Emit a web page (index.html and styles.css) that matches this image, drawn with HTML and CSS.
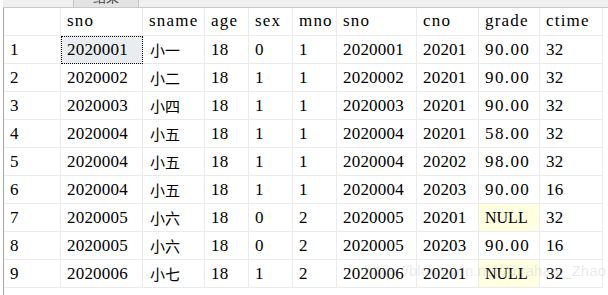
FILE: index.html
```html
<!DOCTYPE html>
<html>
<head>
<meta charset="utf-8">
<link rel="stylesheet" href="styles.css">
</head>
<body>
<div class="page">
  <div class="tabstrip">
    <div class="tab"><span class="tab-label">结果</span></div>
  </div>
  <div class="grid">
    <div class="c h"></div><div class="c h">sno</div><div class="c h">sname</div><div class="c h">age</div><div class="c h">sex</div><div class="c h">mno</div><div class="c h">sno</div><div class="c h">cno</div><div class="c h">grade</div><div class="c h">ctime</div>

    <div class="c">1</div><div class="c sel">2020001</div><div class="c cjk">小一</div><div class="c">18</div><div class="c">0</div><div class="c">1</div><div class="c">2020001</div><div class="c">20201</div><div class="c dec">90.00</div><div class="c">32</div>

    <div class="c">2</div><div class="c">2020002</div><div class="c cjk">小二</div><div class="c">18</div><div class="c">1</div><div class="c">1</div><div class="c">2020002</div><div class="c">20201</div><div class="c dec">90.00</div><div class="c">32</div>

    <div class="c">3</div><div class="c">2020003</div><div class="c cjk">小四</div><div class="c">18</div><div class="c">1</div><div class="c">1</div><div class="c">2020003</div><div class="c">20201</div><div class="c dec">90.00</div><div class="c">32</div>

    <div class="c">4</div><div class="c">2020004</div><div class="c cjk">小五</div><div class="c">18</div><div class="c">1</div><div class="c">1</div><div class="c">2020004</div><div class="c">20201</div><div class="c dec">58.00</div><div class="c">32</div>

    <div class="c">5</div><div class="c">2020004</div><div class="c cjk">小五</div><div class="c">18</div><div class="c">1</div><div class="c">1</div><div class="c">2020004</div><div class="c">20202</div><div class="c dec">98.00</div><div class="c">32</div>

    <div class="c">6</div><div class="c">2020004</div><div class="c cjk">小五</div><div class="c">18</div><div class="c">1</div><div class="c">1</div><div class="c">2020004</div><div class="c">20203</div><div class="c dec">90.00</div><div class="c">16</div>

    <div class="c">7</div><div class="c">2020005</div><div class="c cjk">小六</div><div class="c">18</div><div class="c">0</div><div class="c">2</div><div class="c">2020005</div><div class="c">20201</div><div class="c null">NULL</div><div class="c">32</div>

    <div class="c">8</div><div class="c">2020005</div><div class="c cjk">小六</div><div class="c">18</div><div class="c">0</div><div class="c">2</div><div class="c">2020005</div><div class="c">20203</div><div class="c dec">90.00</div><div class="c">16</div>

    <div class="c">9</div><div class="c">2020006</div><div class="c cjk">小七</div><div class="c">18</div><div class="c">1</div><div class="c">2</div><div class="c">2020006</div><div class="c">20201</div><div class="c null">NULL</div><div class="c">32</div>
  </div>
  <div class="watermark">https://blog.csdn.net/Abraham_Zhao</div>
</div>
</body>
</html>
```

FILE: styles.css
```css
html, body {
  margin: 0;
  padding: 0;
  background: #ffffff;
}

.page {
  position: relative;
  width: 608px;
  height: 295px;
  overflow: hidden;
  background: #ffffff;
}

.tabstrip {
  height: 7px;
  background: #f0f0f0;
  border-bottom: 1px solid #c9c9c9;
  margin-left: 3px;
  position: relative;
}

.tab {
  position: absolute;
  left: 70px;
  top: 0;
  width: 64px;
  height: 7px;
  background: #e3e3e3;
  border-left: 1px solid #c4c4c4;
  border-right: 1px solid #c4c4c4;
  overflow: hidden;
  text-align: center;
}

.tab-label {
  display: block;
  font-family: "Noto Sans CJK SC", sans-serif;
  font-size: 13px;
  line-height: 13px;
  margin-top: -10px;
  color: #444;
}

.grid {
  display: grid;
  grid-template-columns: 57px 82px 62px 44px 44px 44px 80px 62px 61px 63px;
  grid-auto-rows: 28px;
  margin-left: 3px;
  border-left: 1px solid #a8a8a8;
  height: 287px;
  align-content: start;
}

.c {
  box-sizing: border-box;
  border-right: 1px solid #ebebeb;
  border-bottom: 1px solid #ebebeb;
  padding-left: 6px;
  font-family: "Liberation Serif", serif;
  font-size: 17px;
  letter-spacing: 0.2px;
  line-height: 27px;
  color: #000;
  white-space: nowrap;
  overflow: hidden;
}

.h {
  line-height: 25px;
  letter-spacing: 1.2px;
}

.dec {
  letter-spacing: 1.4px;
}

.cjk {
  font-family: "Noto Sans CJK SC", sans-serif;
  font-size: 15px;
  padding-left: 7px;
  letter-spacing: 0;
}

.sel {
  background: #e9edf0;
  outline: 1px dotted #000;
  outline-offset: -1px;
}

.null {
  background: #ffffe1;
  font-size: 16px;
  letter-spacing: 0;
}

.watermark {
  position: absolute;
  left: 364px;
  top: 262px;
  font-family: "Liberation Sans", sans-serif;
  font-size: 15px;
  color: rgba(170, 170, 170, 0.25);
  white-space: nowrap;
  pointer-events: none;
}
```
